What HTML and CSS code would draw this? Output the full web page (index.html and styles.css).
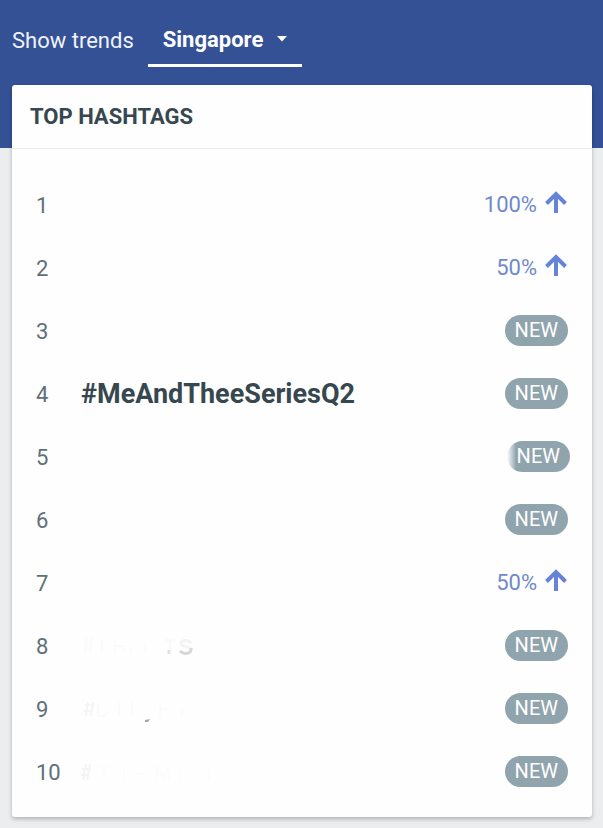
FILE: index.html
```html
<!DOCTYPE html>
<html lang="en">
<head>
<meta charset="utf-8">
<meta name="viewport" content="width=device-width, initial-scale=1">
<title>Top hashtags</title>
<link rel="stylesheet" href="styles.css">
</head>
<body>
<svg class="defs" aria-hidden="true">
  <symbol id="up" viewBox="0 0 24 24"><path d="M12 23V4M2.500 13.500L12 4L21.500 13.500" fill="none" stroke="currentColor" stroke-width="4"/></symbol>
</svg>
<header class="topbar">
  <label class="topbar-label" for="region">Show trends</label>
  <div class="picker">
    <select id="region" class="picker-select"><option>Singapore</option></select>
    <svg class="picker-caret" viewBox="0 0 10 6" aria-hidden="true"><path d="M0 0H10L5 5.500Z" fill="#fff"/></svg>
  </div>
</header>
<main class="card">
  <h1 class="card-title">TOP HASHTAGS</h1>
  <ol class="trends">
    <li class="trend"><span class="rank">1</span><span class="tag"></span><span class="change">100%<svg class="arrow" aria-hidden="true"><use href="#up"/></svg></span></li>
    <li class="trend"><span class="rank">2</span><span class="tag"></span><span class="change">50%<svg class="arrow" aria-hidden="true"><use href="#up"/></svg></span></li>
    <li class="trend"><span class="rank">3</span><span class="tag"></span><span class="badge">NEW</span></li>
    <li class="trend"><span class="rank">4</span><span class="tag">#MeAndTheeSeriesQ2</span><span class="badge">NEW</span></li>
    <li class="trend trend-wide"><span class="rank">5</span><span class="tag"></span><span class="badge badge-faded">NEW</span></li>
    <li class="trend"><span class="rank">6</span><span class="tag"></span><span class="badge">NEW</span></li>
    <li class="trend"><span class="rank">7</span><span class="tag"></span><span class="change">50%<svg class="arrow" aria-hidden="true"><use href="#up"/></svg></span></li>
    <li class="trend"><span class="rank">8</span><span class="tag"><svg class="trace" viewBox="0 0 140 32" aria-hidden="true"><g fill="none"><path d="M3 12H12M2 18H11M6 8L4 23M11 8L9 23M21 9V23M34 9V23M34 16H43V23M50 16V23M64 12V23" stroke="#fbfbfb" stroke-width="2"/><path d="M84 10H94M89 10V20" stroke="#fafafa" stroke-width="3"/><path d="M88 20V24" stroke="#e2e2e2" stroke-width="3"/><path d="M110 13C107 9 100 10 100 14C100 17 110 16 110 20" stroke="#f4f4f4" stroke-width="3"/><path d="M110 18C111 24 103 25 99 21" stroke="#d6d6d6" stroke-width="3"/></g></svg></span><span class="badge">NEW</span></li>
    <li class="trend"><span class="rank">9</span><span class="tag"><svg class="trace" viewBox="0 0 140 32" aria-hidden="true"><g fill="none"><path d="M4 12H13M3 18H12M7 9L5 23M12 9L10 23" stroke="#f5f5f5" stroke-width="2"/><path d="M17 9V23H23Q27 22 26 17M38 9V23M51 9V23M79 10V23M79 16H88M101 16V23" stroke="#fbfbfb" stroke-width="2"/></g><path d="M64 27L69 26L67 29H64Z" fill="#a6a6a6"/></svg></span><span class="badge">NEW</span></li>
    <li class="trend"><span class="rank">10</span><span class="tag"><svg class="trace" viewBox="0 0 140 32" aria-hidden="true"><g fill="none"><path d="M1 13H10M0 19H8M5 8L2 24M9 8L6 24" stroke="#f4f4f4" stroke-width="2"/><path d="M17 10H29M23 10V24M43 10V24M57 18H63M76 24V10L82 22L88 10V24M99 15V24M128 10V24" stroke="#fcfcfc" stroke-width="2"/></g></svg></span><span class="badge">NEW</span></li>
  </ol>
</main>
</body>
</html>
```
FILE: styles.css
```css
* {
  box-sizing: border-box;
}

body {
  margin: 0;
  background: linear-gradient(#345196 148px, #ebedef 148px) no-repeat #ebedef;
  color: #37474f;
  font-family: Roboto, sans-serif;
  font-size: 22px;
}

.defs {
  position: absolute;
  width: 0;
  height: 0;
}

.topbar {
  display: flex;
  align-items: flex-start;
  gap: 14px;
  padding: 12px 12px 18px;
  color: #fff;
}

.topbar-label {
  padding-top: 3px;
  line-height: 52px;
  color: #f0f3fb;
}

.picker {
  display: grid;
  align-items: center;
  border-bottom: 3px solid #fff;
}

.picker-select {
  grid-area: 1 / 1;
  height: 52px;
  margin: 0;
  padding: 2px 38px 0 15px;
  border: 0;
  background: transparent;
  color: #fff;
  font: 700 22px Roboto, sans-serif;
  appearance: none;
}

.picker-caret {
  grid-area: 1 / 1;
  justify-self: end;
  width: 10px;
  height: 6px;
  margin: 2px 15px 0 0;
  pointer-events: none;
}

.card {
  margin: 0 11px 11px 12px;
  border-radius: 3px;
  background: #fefefe;
  box-shadow: 0 2px 4px rgba(0, 0, 0, 0.25);
}

.card-title {
  margin: 0;
  padding: 1px 18px 0;
  border-bottom: 1px solid #e8eaec;
  font-size: 22px;
  font-weight: 700;
  line-height: 62px;
}

.trends {
  margin: 0;
  padding: 24px 24px 14px;
  list-style: none;
}

.trend {
  display: flex;
  align-items: center;
  height: 63px;
}

.trend-wide {
  margin-right: -2px;
}

.rank {
  width: 45px;
  padding-top: 2px;
  color: #607078;
}

.tag {
  flex: 1;
  font-size: 27px;
  font-weight: 700;
}

.trace {
  display: block;
  width: 140px;
  height: 32px;
}

.change {
  display: flex;
  align-items: center;
  gap: 7px;
  color: #7089cc;
}

.arrow {
  width: 24px;
  height: 24px;
  margin-bottom: 5px;
  color: #6584d8;
}

.badge {
  padding: 0 10px;
  border-radius: 16px;
  background: #90a4ae;
  color: #fff;
  font-size: 20px;
  line-height: 31px;
}

.badge-faded {
  background: linear-gradient(90deg, #fefefe, #90a4ae 9px);
}
```
